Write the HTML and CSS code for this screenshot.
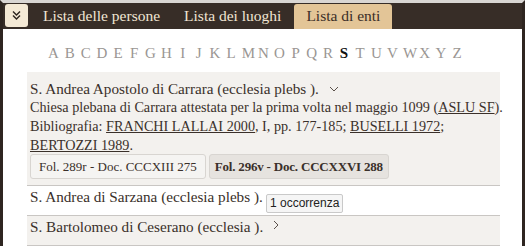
FILE: index.html
```html
<!DOCTYPE html>
<html lang="it">
<head>
<meta charset="utf-8">
<title>Lista di enti</title>
<link rel="stylesheet" href="styles.css">
</head>
<body>
<div class="frame">
  <nav class="tabs">
    <button class="toggle" aria-label="menu">
      <svg width="11" height="11" viewBox="0 0 11 11"><path d="M2 1.5 L5.5 5 L9 1.5 M2 5.5 L5.5 9 L9 5.5" fill="none" stroke="#2b221d" stroke-width="1.4"/></svg>
    </button>
    <a class="tab">Lista delle persone</a>
    <a class="tab">Lista dei luoghi</a>
    <a class="tab active">Lista di enti</a>
  </nav>
  <div class="alpha">
    <span>A</span><span>B</span><span>C</span><span>D</span><span>E</span><span>F</span><span>G</span><span>H</span><span>I</span><span>J</span><span>K</span><span>L</span><span>M</span><span>N</span><span>O</span><span>P</span><span>Q</span><span>R</span><span class="cur">S</span><span>T</span><span>U</span><span>V</span><span>W</span><span>X</span><span>Y</span><span>Z</span>
  </div>
  <ul class="list">
    <li class="item open">
      <div class="title">S. Andrea Apostolo di Carrara (ecclesia plebs ). <svg class="chev" width="10" height="6" viewBox="0 0 10 6"><path d="M1 1 L5 5 L9 1" fill="none" stroke="#5a504a" stroke-width="1"/></svg></div>
      <div class="desc">Chiesa plebana di Carrara attestata per la prima volta nel maggio 1099 (<u>ASLU SF</u>).<br>Bibliografia: <u>FRANCHI LALLAI 2000</u>, I, pp. 177-185; <u>BUSELLI 1972</u>;<br><u>BERTOZZI 1989</u>.</div>
      <div class="refs">
        <button class="ref">Fol. 289r - Doc. CCCXIII 275</button>
        <button class="ref sel">Fol. 296v - Doc. CCCXXVI 288</button>
      </div>
    </li>
    <li class="item hover">
      <div class="title">S. Andrea di Sarzana (ecclesia plebs ).<span class="tip">1 occorrenza</span></div>
    </li>
    <li class="item">
      <div class="title">S. Bartolomeo di Ceserano (ecclesia ). <svg class="chev" width="6" height="10" viewBox="0 0 6 10"><path d="M1 1 L5 5 L1 9" fill="none" stroke="#5a504a" stroke-width="1"/></svg></div>
    </li>
  </ul>
</div>
</body>
</html>
```
FILE: styles.css
```css
html, body {
  margin: 0;
  padding: 0;
  background: #fff;
}
body {
  font-family: "Liberation Serif", serif;
  color: #3a302a;
  width: 525px;
  height: 246px;
  overflow: hidden;
}
.frame {
  height: 243px;
  border-top: 3px solid #d9d6d3;
  border-left: 3px solid #2e2520;
  border-right: 3px solid #2e2520;
  background: #fff;
}
.tabs {
  height: 26px;
  background: #372d27;
  display: flex;
  align-items: flex-end;
  padding-left: 2px;
}
.toggle {
  width: 23px;
  height: 23px;
  margin-bottom: 2px;
  margin-right: 3px;
  border: none;
  border-radius: 3px;
  background: #f4e9d5;
  display: flex;
  align-items: center;
  justify-content: center;
  padding: 0;
}
.tab {
  font-size: 15.5px;
  color: #f1e6d4;
  padding: 0 12px;
  height: 25px;
  line-height: 24px;
}
.tab.active {
  background: #e3c597;
  color: #3a2e27;
  border-radius: 3px 3px 0 0;
  padding: 0 12px;
  margin-left: 1px;
}
.alpha {
  display: flex;
  padding-top: 5px;
  padding-left: 45px;
  height: 38px;
  align-items: center;
  font-size: 15px;
  color: #9a9693;
}
.alpha span {
  width: 11px;
  margin-right: 5.15px;
  text-align: center;
}
.alpha .cur {
  color: #111;
  font-weight: bold;
}
.list {
  list-style: none;
  margin: 0 0 0 24px;
  padding: 0;
  width: 473px;
}
.item {
  background: #f3f1ee;
  border-bottom: 1px solid #c9c6c3;
  padding: 1px 3px 9px;
  font-size: 15.2px;
  line-height: 19px;
}
.item.open {
  padding: 7px 3px 6px;
}
.item.hover { background: #fff; }
.title { position: relative; }
.chev { margin-left: 6px; vertical-align: 2px; }
.desc {
  color: #3a302a;
  font-size: 14.2px;
  white-space: nowrap;
}
.refs {
  display: flex;
  gap: 3px;
  margin-top: -1px;
}
.ref {
  font-family: "Liberation Serif", serif;
  font-size: 13px;
  color: #3a302a;
  background: #f5f4f2;
  border: 1px solid #d8d5d1;
  border-radius: 3px;
  height: 25px;
  padding: 0 8px;
}
.ref.sel {
  background: #e6e3df;
  font-weight: bold;
  letter-spacing: -0.2px;
  padding: 0 5px;
}
.tip {
  position: absolute;
  left: 236px;
  top: 7px;
  font-family: "Liberation Sans", sans-serif;
  font-size: 12px;
  line-height: 17px;
  color: #222;
  background: #f5f5f5;
  border: 1px solid #c9c9c9;
  border-radius: 2px;
  padding: 0 3px;
}
```
